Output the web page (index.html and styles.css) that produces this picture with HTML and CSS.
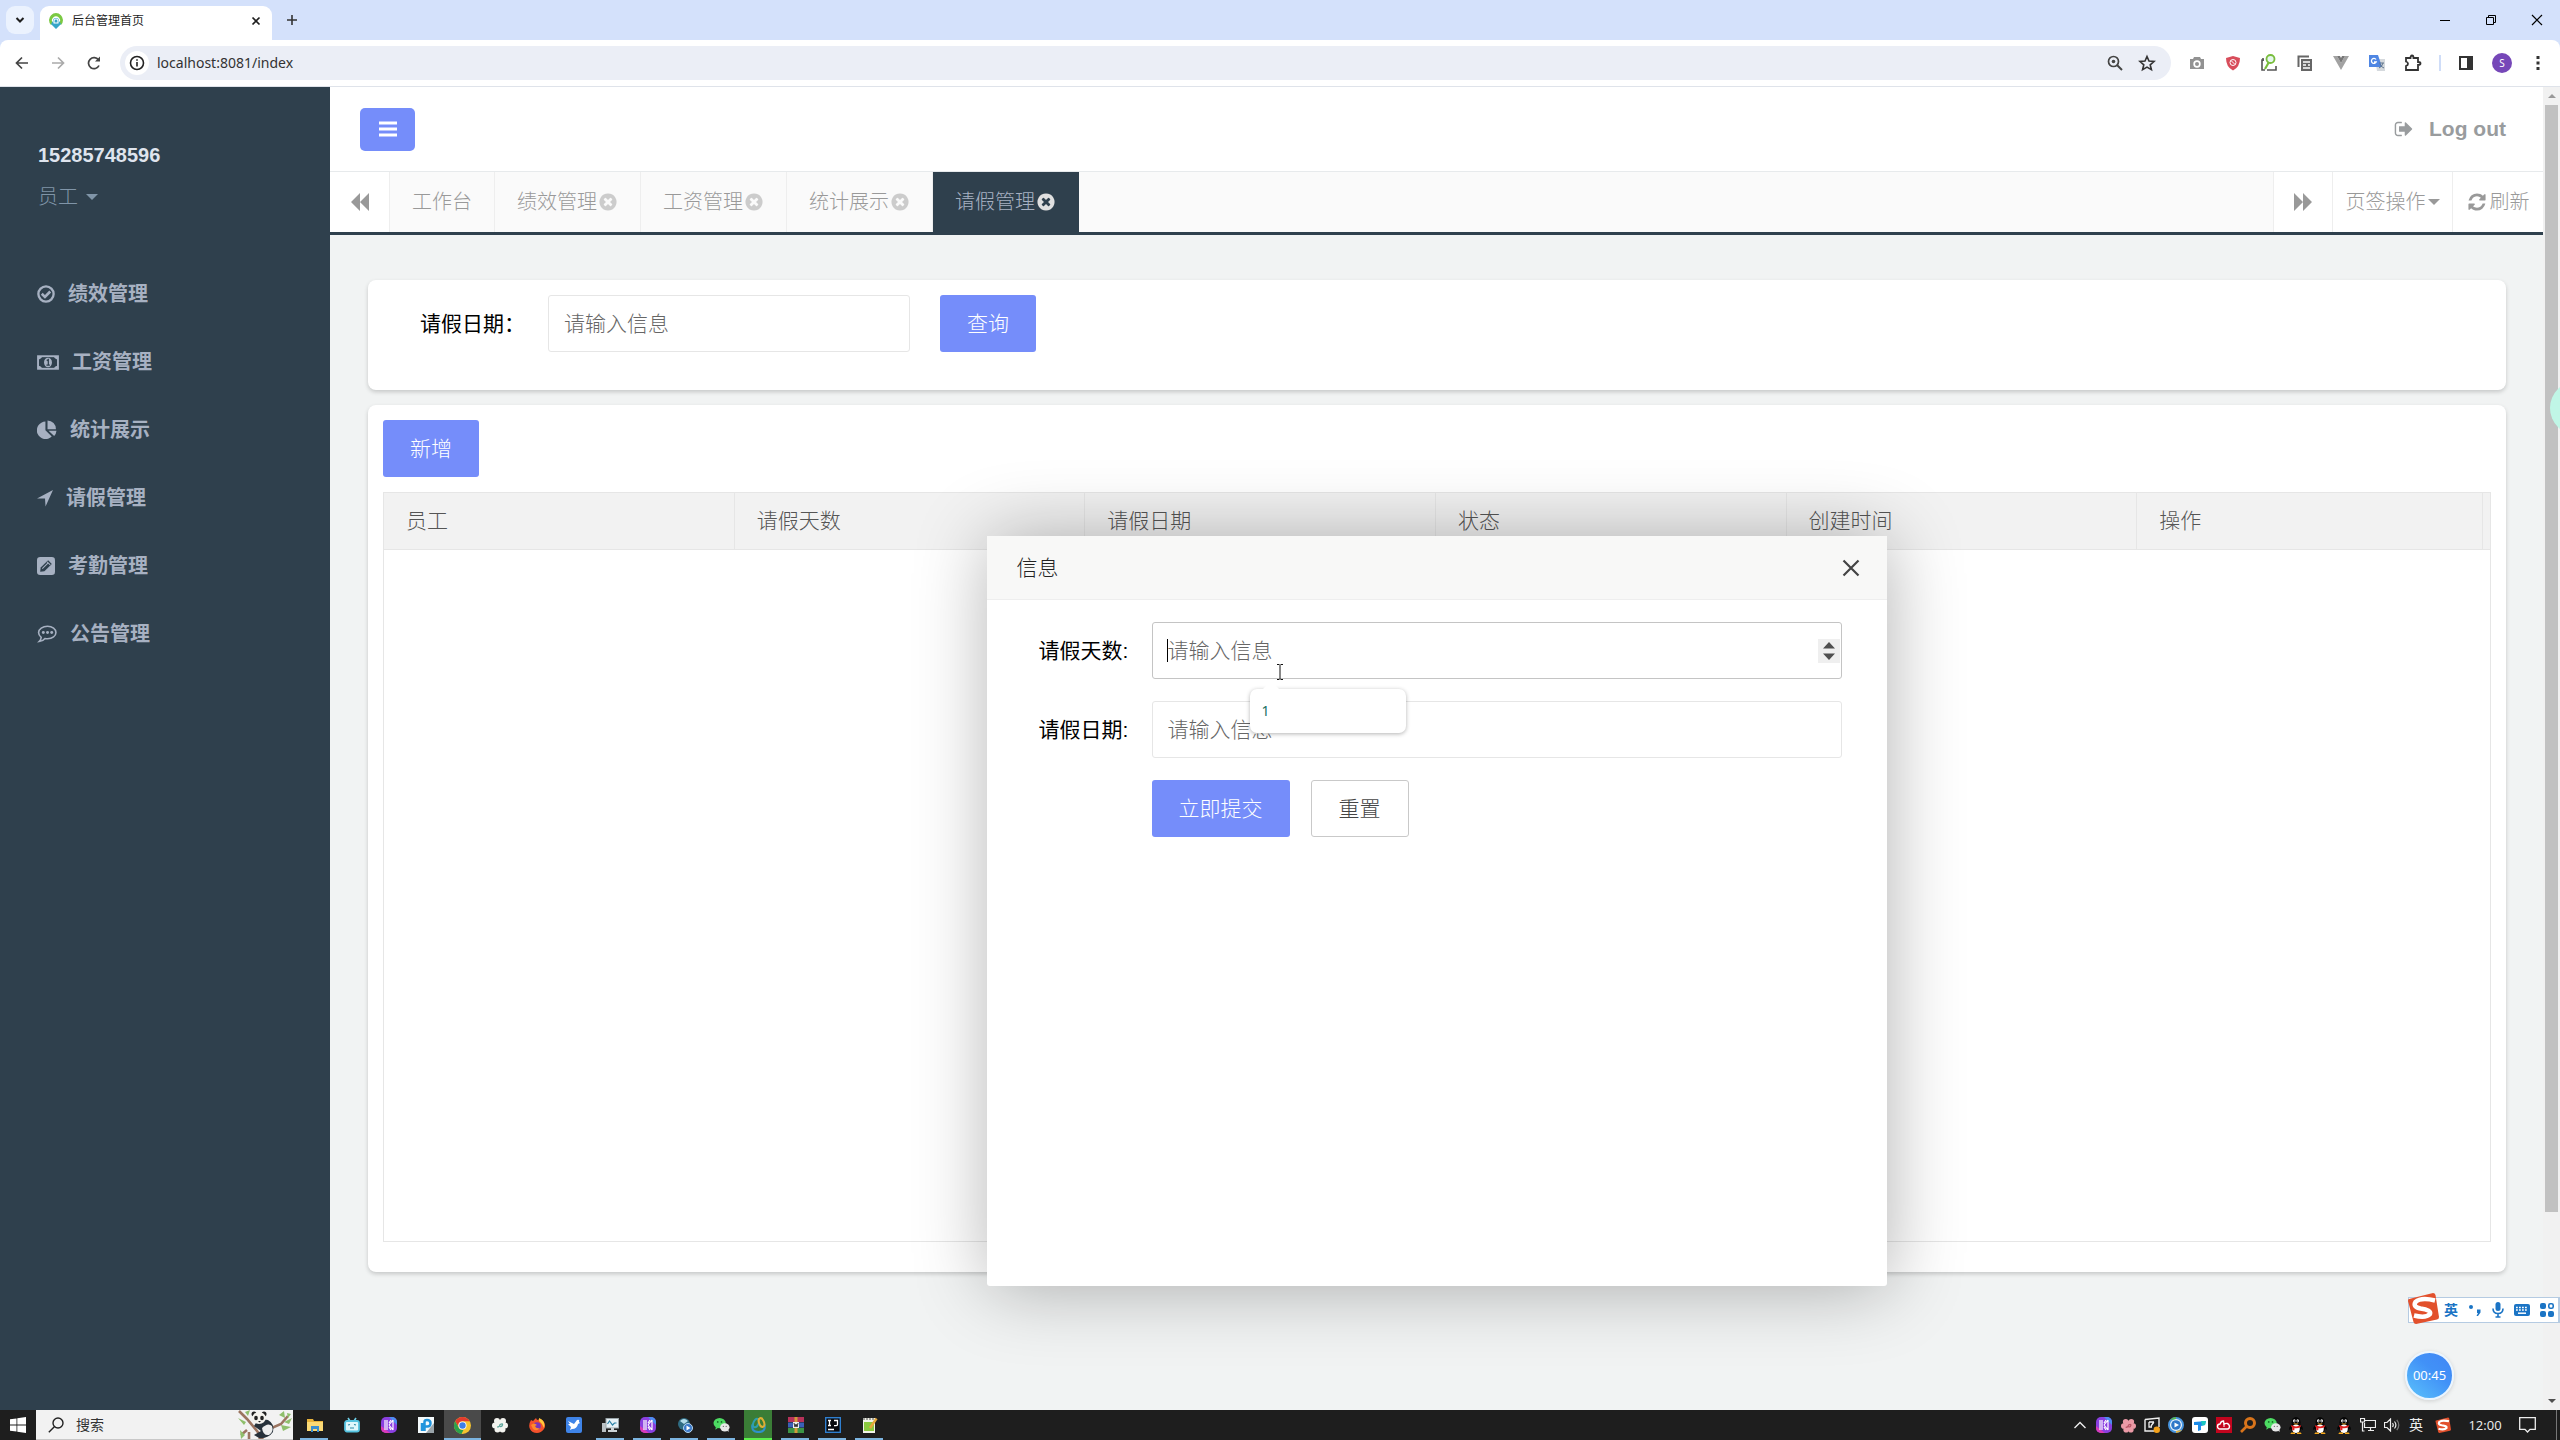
FILE: index.html
```html
<!DOCTYPE html>
<html lang="zh-CN">
<head>
<meta charset="utf-8">
<title>后台管理首页</title>
<link rel="stylesheet" href="styles.css">
</head>
<body>
<svg class="defs" aria-hidden="true">
  <symbol id="i-close-circle" viewBox="0 0 1792 1792"><path d="M1277 1122q0-26-19-45l-181-181 181-181q19-19 19-45 0-27-19-46l-90-90q-19-19-46-19-26 0-45 19l-181 181-181-181q-19-19-45-19-27 0-46 19l-90 90q-19 19-19 46 0 26 19 45l181 181-181 181q-19 19-19 45 0 27 19 46l90 90q19 19 46 19 26 0 45-19l181-181 181 181q19 19 45 19 27 0 46-19l90-90q19-19 19-46zm387-226q0 209-103 385.500t-279.500 279.500-385.500 103-385.500-103-279.500-279.500-103-385.500 103-385.500 279.500-279.500 385.500-103 385.500 103 279.500 279.500 103 385.500z"/></symbol>
  <symbol id="i-tile-k" viewBox="0 0 16 16"><rect width="16" height="16" rx="5" fill="#8a3fe0"/><path d="M8 0h3a5 5 0 0 1 5 5v3z" fill="#4c8df0"/><path d="M0 9v2a5 5 0 0 0 5 5h4z" fill="#d93bb8"/><path d="M4 3v10M6 3v10M8 8l4-5M8 8l4 5M10 3L8 6M10 13L8 10M12 3v10" stroke="#fff" stroke-width="1.200" fill="none"/></symbol>
  <symbol id="i-wechat" viewBox="0 0 18 16"><ellipse cx="7" cy="6" rx="6.500" ry="5.500" fill="#4ddb62"/><path d="M3 10l-.500 3 3-2z" fill="#4ddb62"/><ellipse cx="12.500" cy="10.500" rx="5" ry="4.300" fill="#e8e8e8"/><path d="M15 14l1.500 1.500V13z" fill="#e8e8e8"/><circle cx="5" cy="4.700" r=".9" fill="#176b28"/><circle cx="9" cy="4.700" r=".9" fill="#176b28"/><circle cx="11" cy="9.500" r=".7" fill="#777"/><circle cx="14" cy="9.500" r=".7" fill="#777"/></symbol>
  <symbol id="i-qq" viewBox="0 0 16 18"><path d="M3 9q-3 2-2 5l2-2zM13 9q3 2 2 5l-2-2z" fill="#050505"/><ellipse cx="8" cy="11" rx="5.500" ry="6" fill="#050505"/><ellipse cx="8" cy="5.500" rx="4.700" ry="5.500" fill="#050505"/><ellipse cx="8" cy="12.500" rx="4" ry="4.500" fill="#fff"/><path d="M3 8.500q5 3 10 0v2q-5 3-10 0zM4 11h2.300v3H4z" fill="#e02020"/><ellipse cx="6.200" cy="4" rx="1.300" ry="1.700" fill="#fff"/><ellipse cx="9.800" cy="4" rx="1.300" ry="1.700" fill="#fff"/><circle cx="6.500" cy="4.200" r=".6"/><circle cx="9.500" cy="4.200" r=".6"/><path d="M5 7h6q-3 2-6 0zM3 16.500h4v1.500H2zM9 16.500h4l1 1.500H9z" fill="#f7a91c"/></symbol>
  <symbol id="i-sogou" viewBox="0 0 32 32"><path d="M2 7L26 1q2 0 2.500 2L32 25q0 2-2 2.500L9 32q-2 0-2.500-2L1 9q0-2 1-2z" fill="#e2502c"/><path d="M28 8.500Q14 5 8.500 10q-3 5 5 6.500 11 1.500 9.500 5.500-4 4.500-16 1.500" fill="none" stroke="#fff" stroke-width="4.500"/></symbol>
</svg>

<header class="browser">
  <div class="tabstrip">
    <button class="tab-search" aria-label="搜索标签页"><svg width="10" height="10" viewBox="0 0 10 10"><path d="M1.500 3L5 6.500 8.500 3" fill="none" stroke="#1f1f1f" stroke-width="2"/></svg></button>
    <div class="browser-tab">
      <svg width="16" height="16" viewBox="0 0 16 16"><path d="M3 12A7 7 0 1 1 13 12l-2-2a4 4 0 1 0-6 0z" fill="#7ac943"/><path d="M8 5a3 3 0 0 1 3 3l2 3-5 5-5-5 2-3a3 3 0 0 1 3-3z" fill="#35a5c8"/><path d="M6 9.500V8a2 2 0 0 1 4 0v1.500M5.500 10h5" stroke="#fff" fill="none" stroke-width="1.200"/></svg>
      <span class="browser-tab-title">后台管理首页</span>
      <button class="icon-btn" aria-label="关闭标签页"><svg width="10" height="10" viewBox="0 0 10 10"><path d="M1.500 1.500l7 7M8.500 1.500l-7 7" stroke="#1f1f1f" stroke-width="1.700"/></svg></button>
    </div>
    <button class="icon-btn new-tab" aria-label="新标签页"><svg width="12" height="12" viewBox="0 0 12 12"><path d="M6 1v10M1 6h10" stroke="#333" stroke-width="1.600"/></svg></button>
    <div class="window-controls">
      <button class="icon-btn" aria-label="最小化"><svg width="12" height="12" viewBox="0 0 12 12"><path d="M1 6.500h10" stroke="#000"/></svg></button>
      <button class="icon-btn" aria-label="还原"><svg width="12" height="12" viewBox="0 0 12 12"><path d="M1.500 3.500h7v7h-7zM3.500 3V1.500h7v7H9" fill="none" stroke="#000"/></svg></button>
      <button class="icon-btn" aria-label="关闭"><svg width="12" height="12" viewBox="0 0 12 12"><path d="M1 1l10 10M11 1L1 11" stroke="#000" stroke-width="1.200"/></svg></button>
    </div>
  </div>
  <div class="toolbar">
    <div class="nav-buttons">
      <button class="icon-btn" aria-label="后退"><svg width="14" height="14" viewBox="0 0 14 14"><path d="M13 7H2M7 1.500L1.500 7 7 12.500" fill="none" stroke="#444" stroke-width="1.700"/></svg></button>
      <button class="icon-btn" aria-label="前进"><svg width="14" height="14" viewBox="0 0 14 14"><path d="M1 7h11M7 1.500L12.500 7 7 12.500" fill="none" stroke="#aaa" stroke-width="1.700"/></svg></button>
      <button class="icon-btn" aria-label="重新加载"><svg width="14" height="14" viewBox="0 0 14 14"><path d="M12 9.500A5.500 5.500 0 1 1 11.500 4" fill="none" stroke="#444" stroke-width="1.700"/><path d="M13 .5v5H8z" fill="#444"/></svg></button>
    </div>
    <div class="omnibox">
      <span class="site-info"><svg width="16" height="16" viewBox="0 0 16 16"><circle cx="8" cy="8" r="6.500" fill="none" stroke="#222" stroke-width="1.600"/><path d="M8 7v4.500M8 4.200v1.600" stroke="#222" stroke-width="1.600"/></svg></span>
      <input class="url" type="text" value="localhost:8081/index" aria-label="地址">
      <button class="icon-btn" aria-label="缩放"><svg width="16" height="16" viewBox="0 0 16 16"><circle cx="6.500" cy="6.500" r="5" fill="none" stroke="#444" stroke-width="1.700"/><circle cx="6.500" cy="6.500" r="1.800" fill="#444"/><path d="M10 10l5 5" stroke="#444" stroke-width="1.900"/></svg></button>
      <button class="icon-btn" aria-label="收藏"><svg width="18" height="18" viewBox="0 0 18 18"><path d="M9 2.500l2 4.600 5 .4-3.800 3.300 1.200 4.900L9 13.100l-4.400 2.600 1.200-4.900L2 7.500l5-.4z" fill="none" stroke="#333" stroke-width="1.600"/></svg></button>
    </div>
    <div class="extensions">
      <svg width="16" height="16" viewBox="0 0 16 16"><path d="M1 4h3l1-2h6l1 2h3v10H1z" fill="#929292"/><circle cx="8" cy="9" r="3.700" fill="#fff"/><circle cx="8" cy="9" r="2" fill="#929292"/></svg>
      <svg width="16" height="16" viewBox="0 0 16 16"><path d="M8 1l7 2q0 9-7 12.500Q1 12 1 3z" fill="#d84d5b"/><circle cx="8" cy="7.500" r="3" fill="none" stroke="#fff"/><path d="M6 5.500l4 4" stroke="#fff"/></svg>
      <svg width="16" height="18" viewBox="0 0 16 18"><path d="M3 6H1v10h3M6 16h9v-4M2 4v3" fill="none" stroke="#555" stroke-width="1.600"/><circle cx="9.500" cy="5" r="4" fill="#e5f6ee" stroke="#79bd3c" stroke-width="1.800"/><path d="M8 8l-4 7" stroke="#79bd3c" stroke-width="2.200"/></svg>
      <svg width="16" height="16" viewBox="0 0 16 16"><path d="M1.500 12V1.500H12" fill="none" stroke="#666" stroke-width="2"/><path d="M4 4h11v12H4z" fill="#666"/><path d="M6 7h7M6 10h3M6 13h7M11 10h2" stroke="#fff" stroke-width="1.300"/></svg>
      <svg width="16" height="16" viewBox="0 0 16 16"><path d="M0 1h4l4 7 4-7h4L8 15z" fill="#a2a2a2"/><path d="M4 1h3l1 2 1-2h3L8 8z" fill="#777"/></svg>
      <svg width="16" height="16" viewBox="0 0 16 16"><path d="M6 4h10v12H8z" fill="#d5d9dd"/><path d="M0 0h9l4 12H0z" fill="#4f86e3"/><path d="M7 4.500A2.500 2.500 0 1 0 7.200 7H5" fill="none" stroke="#fff" stroke-width="1.300"/><path d="M10 8h5M14 8q-1 4-4 5M11 9q1 3 4 4" fill="none" stroke="#60758c"/></svg>
      <svg width="18" height="18" viewBox="0 0 18 18"><path d="M2 4h4.500q0-2.500 1.500-2.500T9.500 4H14v4q2.500 0 2.500 1.500T14 11v5H2v-4q2-.5 2-2.200T2 7.500z" fill="none" stroke="#333" stroke-width="1.800"/></svg>
      <span class="ext-divider"></span>
      <svg width="16" height="16" viewBox="0 0 16 16"><rect x="2" y="2" width="12" height="12" fill="none" stroke="#333" stroke-width="2"/><path d="M9 2h5v12H9z" fill="#333"/></svg>
      <span class="avatar">S</span>
      <svg width="16" height="16" viewBox="0 0 16 16"><path d="M6.500 1h3v3h-3zM6.500 6.500h3v3h-3zM6.500 12h3v3h-3z" fill="#333"/></svg>
    </div>
  </div>
</header>

<div class="app">
  <aside class="sidebar">
    <div class="profile">
      <strong class="profile-name">15285748596</strong>
      <a class="profile-role" href="#">员工 <span class="caret"></span></a>
    </div>
    <nav class="menu">
      <a href="#"><svg width="18" height="18" viewBox="0 0 17 17"><circle cx="8.500" cy="8.500" r="7.200" fill="none" stroke="currentColor" stroke-width="2.200"/><path d="M4.500 8.300l3 3 5-5.200" fill="none" stroke="currentColor" stroke-width="2.500"/></svg>绩效管理</a>
      <a href="#"><svg width="22" height="15" viewBox="0 0 21 14"><rect x="1" y="1" width="19" height="12" fill="none" stroke="currentColor" stroke-width="1.800"/><path d="M1 1h4q-1 3-4 3zM20 1h-4q1 3 4 3zM1 13h4q-1-3-4-3zM20 13h-4q1-3 4-3z" fill="currentColor"/><ellipse cx="10.500" cy="7" rx="3.800" ry="4.600" fill="currentColor"/><path d="M9.300 5.200l1.500-1v5M9 9.500h3.300" fill="none" stroke="#2f404d" stroke-width="1.200"/></svg>工资管理</a>
      <a href="#"><svg width="20" height="20" viewBox="0 0 19 19"><path d="M8 1.500v8.300l6 5.900A8.300 8.300 0 1 1 8 1.500z" fill="currentColor"/><path d="M10 .5a8 8 0 0 1 8 8.200h-8zM11 10.200h7.500q-.2 2.800-2.200 5z" fill="currentColor"/></svg>统计展示</a>
      <a href="#"><svg width="16" height="17" viewBox="0 0 15 16"><path d="M15 0L8 15.500 7.500 8H0z" fill="currentColor"/></svg>请假管理</a>
      <a href="#"><svg width="18" height="18" viewBox="0 0 17 17"><rect width="17" height="17" rx="3" fill="currentColor"/><path d="M3 14l.5-4 7-7 3.500 3.500-7 7z" fill="#2f404d"/><path d="M5 11l5.500-5.500M9.500 4.500l3 3" stroke="currentColor" stroke-width="1"/></svg>考勤管理</a>
      <a href="#"><svg width="20" height="18" viewBox="0 0 19 17"><path d="M10 1.200c4.600 0 8 2.600 8 5.900S14.600 13 10 13q-1.400 0-2.400-.2Q5.500 15.500 2 15.700q2-1.800 2-4Q1.500 9.800 1.500 7.100C1.500 3.800 5.400 1.200 10 1.200z" fill="none" stroke="currentColor" stroke-width="1.500"/><circle cx="6" cy="7" r="1.400" fill="currentColor"/><circle cx="10" cy="7" r="1.400" fill="currentColor"/><circle cx="14" cy="7" r="1.400" fill="currentColor"/></svg>公告管理</a>
    </nav>
  </aside>

  <main class="main">
    <div class="topbar">
      <button class="btn menu-toggle" aria-label="折叠菜单"><svg width="18" height="16" viewBox="0 0 18 16"><path d="M0 2h18M0 8h18M0 14h18" stroke="#fff" stroke-width="3"/></svg></button>
      <a class="logout" href="#"><svg width="20" height="20" viewBox="0 0 1792 1792"><path fill="currentColor" d="M704 1440q0 4 1 20t.5 26.500-3 23.500-10 19.500-20.500 6.500h-320q-119 0-203.500-84.500t-84.500-203.500v-704q0-119 84.500-203.500t203.500-84.500h320q13 0 22.500 9.500t9.500 22.500q0 4 1 20t.5 26.500-3 23.500-10 19.500-20.500 6.500h-320q-66 0-113 47t-47 113v704q0 66 47 113t113 47h312l11.500 1 11.500 3 8 5.500 7 9 2 13.500zm928-544q0 26-19 45l-544 544q-19 19-45 19t-45-19-19-45v-288h-448q-26 0-45-19t-19-45v-384q0-26 19-45t45-19h448v-288q0-26 19-45t45-19 45 19l544 544q19 19 19 45z"/></svg>Log out</a>
    </div>
    <div class="page-tabs">
      <button class="tab-roll" aria-label="向左"><svg width="18" height="20" viewBox="0 0 18 20"><path d="M9 1v18L0 10zM18 1v18L9 10z" fill="currentColor"/></svg></button>
      <nav class="tab-list">
        <a href="#">工作台</a>
        <a href="#">绩效管理<svg class="tab-close" width="20" height="20"><use href="#i-close-circle"/></svg></a>
        <a href="#">工资管理<svg class="tab-close" width="20" height="20"><use href="#i-close-circle"/></svg></a>
        <a href="#">统计展示<svg class="tab-close" width="20" height="20"><use href="#i-close-circle"/></svg></a>
        <a href="#" class="active">请假管理<svg class="tab-close" width="20" height="20"><use href="#i-close-circle"/></svg></a>
      </nav>
      <button class="tab-roll tab-next" aria-label="向右"><svg width="18" height="20" viewBox="0 0 18 20"><path d="M0 1v18l9-9zM9 1v18l9-9z" fill="currentColor"/></svg></button>
      <button class="tab-ops">页签操作<span class="caret"></span></button>
      <button class="tab-refresh"><svg width="20" height="20" viewBox="0 0 1792 1792"><path fill="currentColor" d="M1639 1056q0 5-1 7-64 268-268 434.500t-478 166.500q-146 0-282.500-55t-243.500-157l-129 129q-19 19-45 19t-45-19-19-45v-448q0-26 19-45t45-19h448q26 0 45 19t19 45-19 45l-137 137q71 66 161 102t187 36q134 0 250-65t186-179q11-17 53-117 8-23 30-23h192q13 0 22.500 9.500t9.500 22.500zm25-800v448q0 26-19 45t-45 19h-448q-26 0-45-19t-19-45 19-45l138-138q-148-137-349-137-134 0-250 65t-186 179q-11 17-53 117-8 23-30 23h-199q-13 0-22.500-9.500t-9.500-22.500v-7q65-268 270-434.500t480-166.500q146 0 284 55.500t245 156.500l130-129q19-19 45-19t45 19 19 45z"/></svg>刷新</button>
    </div>

    <div class="content">
      <form class="card search-card">
        <label for="q-date">请假日期：</label>
        <input class="field" id="q-date" type="text" placeholder="请输入信息">
        <button class="btn" type="button">查询</button>
      </form>
      <section class="card table-card">
        <button class="btn" type="button">新增</button>
        <div class="table-box">
          <table>
            <thead><tr><th>员工</th><th>请假天数</th><th>请假日期</th><th>状态</th><th>创建时间</th><th class="th-last">操作</th><th class="th-patch"></th></tr></thead>
            <tbody></tbody>
          </table>
        </div>
      </section>

      <div class="modal" role="dialog" aria-labelledby="modal-title">
        <div class="modal-head">
          <span id="modal-title">信息</span>
          <button class="icon-btn" aria-label="关闭"><svg width="18" height="18" viewBox="0 0 18 18"><path d="M1.500 1.500l15 15M16.500 1.500l-15 15" stroke="#444" stroke-width="2.200"/></svg></button>
        </div>
        <form class="modal-form">
          <label for="m-days">请假天数:</label>
          <div class="number-field">
            <input class="field focused" id="m-days" type="number" placeholder="请输入信息">
            <span class="text-caret"></span>
            <span class="stepper"><svg width="12" height="20" viewBox="0 0 12 20"><path d="M0 7.500L6 1l6 6.500zM0 12.500L6 19l6-6.500z" fill="#4f4f4f"/></svg></span>
            <svg class="pointer" width="8" height="16" viewBox="0 0 8 16"><path d="M1 .5h2.500M4.500 .5H7M1 15.500h2.500M4.500 15.500H7M4 1v14" stroke="#111" fill="none"/></svg>
            <div class="suggest">1</div>
          </div>
          <label for="m-date">请假日期:</label>
          <input class="field" id="m-date" type="text" placeholder="请输入信息">
          <div class="modal-actions">
            <button class="btn" type="button">立即提交</button>
            <button class="btn btn-plain" type="reset">重置</button>
          </div>
        </form>
      </div>
    </div>
  </main>

  <div class="scrollbar">
    <svg width="8" height="6" viewBox="0 0 8 6"><path d="M0 5l4-4 4 4z" fill="#999"/></svg>
    <div class="scroll-track"><div class="scroll-thumb"></div></div>
    <svg width="8" height="6" viewBox="0 0 8 6"><path d="M0 1l4 4 4-4z" fill="#505050"/></svg>
  </div>

  <div class="edge-ball"></div>
  <div class="ime-bar">
    <svg class="ime-logo" width="32" height="32"><use href="#i-sogou"/></svg>
    <b>英</b>
    <svg width="14" height="14" viewBox="0 0 14 14"><circle cx="3" cy="4" r="2" fill="#1b74c5"/><path d="M9 6.500h3.500v3L10 13H8.500l1.500-3H9z" fill="#1b74c5"/></svg>
    <svg width="12" height="16" viewBox="0 0 12 16"><rect x="3.500" y="0" width="5" height="9" rx="2.500" fill="#1b74c5"/><path d="M1 6.500q0 5 5 5t5-5M6 11.500V15M3.500 15h5" fill="none" stroke="#1b74c5" stroke-width="1.600"/></svg>
    <svg width="16" height="12" viewBox="0 0 16 12"><rect width="16" height="12" rx="2" fill="#1b74c5"/><path d="M2 3.500h12M2 6h12" stroke="#fff" stroke-width="1.500" stroke-dasharray="1.800 1.200"/><path d="M4 9.200h8" stroke="#fff" stroke-width="1.500"/></svg>
    <svg width="14" height="14" viewBox="0 0 14 14"><rect width="6" height="6" rx="2" fill="#1b74c5"/><rect y="8" width="6" height="6" rx="2" fill="#1b74c5"/><rect x="8" y="8" width="6" height="6" rx="2" fill="#1b74c5"/><rect x="8.800" y=".8" width="4.400" height="4.400" rx="1.500" fill="none" stroke="#1b74c5" stroke-width="1.600"/></svg>
  </div>
  <div class="timer">00:45</div>
</div>

<footer class="taskbar">
  <button class="start" aria-label="开始"><svg width="16" height="16" viewBox="0 0 16 16"><path d="M0 2.300L6.500 1.400v6.200H0zM7.300 1.300L16 0v7.600H7.300zM0 8.400h6.500v6.200L0 13.700zM7.300 8.400H16V16l-8.700-1.300z" fill="#fff"/></svg></button>
  <label class="task-search">
    <svg width="16" height="16" viewBox="0 0 16 16"><circle cx="10" cy="6" r="5" fill="none" stroke="#222" stroke-width="1.400"/><path d="M6.300 9.700L.8 15.200" stroke="#222" stroke-width="1.400"/></svg>
    <input type="search" placeholder="搜索" aria-label="搜索">
    <svg width="56" height="29" viewBox="0 0 56 29"><path d="M2 1l8 8 10 12 6 8M22 29l8-9 14-6 7-8M10 20l-6 5M12 22v7" fill="none" stroke="#9b7460" stroke-width="2.600"/><path d="M1 8l8 4-2 3zM3 20l5 5-4 4zM44 15l10 2-8 4zM42 5l5-4 1 7zM50 3l4 1-3 4zM8 2l5-2-2 6zM47 12l8-4-3 6z" fill="#8fbf6b"/><path d="M17 16q4-8 14-6 7 4 5 12-5 7-14 6l-5-3 7-4z" fill="#27313a"/><path d="M25 18q6-6 10-2 2 6-3 9-6 1-7-7z" fill="#eee"/><circle cx="17" cy="4" r="2.500" fill="#222"/><circle cx="27" cy="4" r="2.500" fill="#222"/><ellipse cx="22" cy="8" rx="6.800" ry="6" fill="#f5f3ee"/><ellipse cx="19" cy="8" rx="1.800" ry="2.200" fill="#222"/><ellipse cx="25" cy="8" rx="1.800" ry="2.200" fill="#222"/><path d="M21 11h3l-1.500 1.500z" fill="#222"/></svg>
  </label>
  <div class="task-apps">
    <button class="open" aria-label="文件资源管理器"><svg width="16" height="16" viewBox="0 0 16 16"><path d="M0 2h6l1 2h9v10H0z" fill="#e8b33c"/><path d="M0 5h16v9H0z" fill="#fbd975"/><path d="M4 15V9h8v6h-2v-3H6v3z" fill="#3b8ed0"/></svg></button>
    <button aria-label="哔哩哔哩"><svg width="16" height="16" viewBox="0 0 16 16"><path d="M4 1l2 3M12 1l-2 3" stroke="#6dcfe8" stroke-width="1.600"/><rect x="1" y="4" width="14" height="10.500" rx="2" fill="#dff7fc" stroke="#55c3e0" stroke-width="1.800"/><path d="M4 8l2-.5M10 7.500l2 .5M6 11h4" stroke="#2c8aa5" stroke-width="1.200"/></svg></button>
    <button aria-label="应用"><svg width="16" height="16"><use href="#i-tile-k"/></svg></button>
    <button aria-label="应用"><svg width="16" height="16" viewBox="0 0 16 16"><rect width="16" height="16" fill="#f4fafc"/><path d="M16 6v10H8z" fill="#9aa4aa"/><path d="M6.500 14V5q0-2 2.500-2 3.500 0 3.500 3.300T9 9.500H7M4 14V6" fill="none" stroke="#2295dd" stroke-width="2.500"/></svg></button>
    <button class="open current" aria-label="Chrome"><svg width="17" height="17" viewBox="0 0 16 16"><circle cx="8" cy="8" r="8" fill="#f5c32f"/><path d="M1.100 4A8 8 0 0 1 14.900 4H8a4 4 0 0 0-3.500 6z" fill="#e33b2e"/><path d="M1.100 4l3.400 6A4 4 0 0 0 9 12l-2 4A8 8 0 0 1 1.100 4z" fill="#2ba24c"/><circle cx="8" cy="8" r="3.800" fill="#fff"/><circle cx="8" cy="8" r="3" fill="#3d7ee8"/></svg></button>
    <button aria-label="应用"><svg width="16" height="16" viewBox="0 0 16 16"><g fill="#f3f3ef"><circle cx="5" cy="4" r="3"/><circle cx="11" cy="4" r="3"/><circle cx="3" cy="8.500" r="3"/><circle cx="13" cy="8.500" r="3"/><circle cx="5.500" cy="12.500" r="3"/><circle cx="10.500" cy="12.500" r="3"/><circle cx="8" cy="8" r="5"/></g><path d="M5 10q3 0 3-2.500Q11 6 10.500 8T8 9.500" fill="none" stroke="#5aa39a" stroke-width="1.200"/></svg></button>
    <button aria-label="Firefox"><svg width="16" height="16" viewBox="0 0 16 16"><path d="M2 3l2 1 3-3 1 2q5-2 7 2 2 4 0 7-3 4-7 4-5 0-7-4-2-4 1-9z" fill="#f4512c"/><path d="M10 1q7 3 5 10-2-5-5-7z" fill="#ffca3a"/><circle cx="8" cy="9" r="3.800" fill="#7a36b8"/><path d="M2 8q3-3 6 0l-2 1q1 3 5 2-3 4-7 1z" fill="#ff8a2b"/></svg></button>
    <button aria-label="应用"><svg width="16" height="16" viewBox="0 0 16 16"><rect width="16" height="16" rx="2" fill="#3f84e8"/><path d="M2 4l6 3 3-4q3-1 2 2l1 1-2 1q-1 5-6 5l-2 1 1-3-3-3h2z" fill="#fff"/></svg></button>
    <button class="open" aria-label="监视器"><svg width="17" height="16" viewBox="0 0 17 16"><path d="M0 6h4v9H0z" fill="#b9c0c4"/><rect x="4" y="1.500" width="12.500" height="9.500" fill="#e7f1f6" stroke="#9aa5aa"/><path d="M5.500 7l2-3 3 4 2-2h2" fill="none" stroke="#2a81a6" stroke-width="1.200"/><path d="M9 11h3v2h3v2H6v-2h3z" fill="#cdd3d6"/></svg></button>
    <button class="open" aria-label="应用"><svg width="16" height="16"><use href="#i-tile-k"/></svg></button>
    <button class="open" aria-label="应用"><svg width="16" height="16" viewBox="0 0 16 16"><circle cx="7" cy="7" r="6" fill="#2f6c83"/><path d="M3 4q4-4 8 0L7 7z" fill="#b5dcea"/><circle cx="11" cy="11" r="4.500" fill="#3a79c9" stroke="#b7d6ef"/><path d="M9.500 8.500l4 2.500-4 2.500z" fill="#fff"/></svg></button>
    <button class="open" aria-label="微信"><svg width="17" height="16"><use href="#i-wechat"/></svg></button>
    <button class="open busy" aria-label="应用"><svg width="17" height="16" viewBox="0 0 17 16"><path d="M2.500 7.500Q1 15 8.500 15T14.500 7.500" fill="none" stroke="#2f91c9" stroke-width="2.200"/><ellipse cx="6" cy="6" rx="2.500" ry="4.500" transform="rotate(25 6 6)" fill="none" stroke="#2f9fae" stroke-width="2"/><ellipse cx="11.500" cy="5.500" rx="2.500" ry="4.500" transform="rotate(-20 11.500 5.500)" fill="none" stroke="#dfae34" stroke-width="2"/></svg></button>
    <button class="open" aria-label="WinRAR"><svg width="16" height="16" viewBox="0 0 16 16"><path d="M0 0h16v5H0z" fill="#b8325a"/><path d="M0 5.500h16v5H0z" fill="#3a60b8"/><path d="M0 11h16v5H0z" fill="#3c9445"/><path d="M6.500 0h3v16h-3z" fill="#d49a3a"/><path d="M5 5h6v6H5z" fill="#eee"/><path d="M6 6l1 4 1-3 1 3 1-4" fill="none" stroke="#333"/></svg></button>
    <button class="open" aria-label="IntelliJ IDEA"><svg width="16" height="16" viewBox="0 0 16 16"><rect x=".7" y=".7" width="14.600" height="14.600" fill="#07090e" stroke="#2f7fd0" stroke-width="1.400"/><path d="M3 3.500h3M4.500 3.500v5M3 8.500h3M9 3.500h3.500v4q0 1.200-2 1.200H9M3 12.500h6" fill="none" stroke="#fff" stroke-width="1.300"/></svg></button>
    <button class="open" aria-label="记事本"><svg width="16" height="16" viewBox="0 0 16 16"><path d="M1 1h12v15H1z" fill="#f2f4ea"/><path d="M2 5h10v9H2z" fill="#8ac93e"/><path d="M2 1v2M5 1v2M8 1v2M11 1v2" stroke="#555"/><path d="M14.500 1.500L8 11" stroke="#e7a83a" stroke-width="2.500"/></svg></button>
  </div>
  <div class="tray">
    <span><svg width="12" height="8" viewBox="0 0 12 8"><path d="M.5 7L6 1.500 11.500 7" fill="none" stroke="#eee" stroke-width="1.400"/></svg></span>
    <span><svg width="16" height="16"><use href="#i-tile-k"/></svg></span>
    <span><svg width="15" height="15" viewBox="0 0 16 16"><g fill="#eb9aa6"><circle cx="5" cy="4" r="3"/><circle cx="11" cy="4" r="3"/><circle cx="3" cy="8.500" r="3"/><circle cx="13" cy="8.500" r="3"/><circle cx="5.500" cy="12.500" r="3"/><circle cx="10.500" cy="12.500" r="3"/><circle cx="8" cy="8" r="5"/></g><path d="M5 10q3 0 3-2.500Q11 6 10.500 8T8 9.500" fill="none" stroke="#b75364" stroke-width="1.200"/></svg></span>
    <span><svg width="16" height="16" viewBox="0 0 16 16"><path d="M1 2.500L15 1v9M1 2.500V14h9" fill="none" stroke="#eee" stroke-width="1.400"/><path d="M5 5h5M5 5v5h3M10 5l-3 4" fill="none" stroke="#eee" stroke-width="1.300"/><circle cx="12.800" cy="12.800" r="3.200" fill="#f5a21b"/></svg></span>
    <span><svg width="16" height="16" viewBox="0 0 16 16"><circle cx="8" cy="8" r="7" fill="#eef5fb" stroke="#4795df" stroke-width="2"/><path d="M2 3a8 8 0 0 1 6-3v2z" fill="#59b84e"/><path d="M14 13a8 8 0 0 1-6 3v-2z" fill="#e3b33e"/><circle cx="8" cy="8" r="4.800" fill="#2d76c9"/><path d="M6.500 5.500L11 8l-4.500 2.500z" fill="#fff"/></svg></span>
    <span><svg width="16" height="16" viewBox="0 0 16 16"><rect width="16" height="16" rx="3" fill="#fff"/><path d="M2 5l12-1-1 4-4 1v4l-3 1V8L2 8z" fill="#1b8be8"/><path d="M9 4h5l-1 4-3 .5z" fill="#19c6c0"/></svg></span>
    <span><svg width="16" height="16" viewBox="0 0 16 16"><rect width="16" height="16" fill="#c3051e"/><path d="M4 12a2.500 2.500 0 0 1 0-5q1-3 3.500-3L8 7q4-2 5.500 2 0 3-2 3z" fill="none" stroke="#fff" stroke-width="1.400"/><path d="M8 7v3" stroke="#fff"/></svg></span>
    <span><svg width="16" height="16" viewBox="0 0 16 16"><circle cx="10" cy="6" r="4.500" fill="none" stroke="#d9741b" stroke-width="3"/><path d="M6.500 9.500L1 15" stroke="#d9741b" stroke-width="2.600"/></svg></span>
    <span><svg width="17" height="16"><use href="#i-wechat"/></svg></span>
    <span><svg width="16" height="17"><use href="#i-qq"/></svg></span>
    <span><svg width="16" height="17"><use href="#i-qq"/></svg></span>
    <span><svg width="16" height="17"><use href="#i-qq"/></svg></span>
    <span><svg width="16" height="14" viewBox="0 0 16 14"><path d="M5 2.500h10.500v7H4.500V5M8 12.500h6M10.500 9.500v3M.5.500h4V4h-4zM2.500 4v9h2" fill="none" stroke="#eee" stroke-width="1.200"/></svg></span>
    <span><svg width="16" height="14" viewBox="0 0 16 14"><path d="M.5 4.500H3l3.500-3.500v12L3 9.500H.5zM8.500 5q1.500 2 0 4M10.500 3.500q2.800 3.500 0 7" fill="none" stroke="#eee" stroke-width="1.200"/><path d="M12.800 1.800q4 5.200 0 10.400" fill="none" stroke="#777" stroke-width="1.200"/></svg></span>
    <span>英</span>
    <span class="tray-ime"><svg width="16" height="16"><use href="#i-sogou"/></svg></span>
    <time class="clock">12:00</time>
    <button class="notify" aria-label="通知"><svg width="17" height="16" viewBox="0 0 17 16"><path d="M.7.7h15.600v11.600H11L8.500 15 6 12.300H.7z" fill="none" stroke="#eee" stroke-width="1.300"/></svg></button>
    <span class="show-desktop"></span>
  </div>
</footer>
</body>
</html>
```

FILE: styles.css
```css
* { box-sizing: border-box; }

body {
  margin: 0;
  height: 100vh;
  display: flex;
  flex-direction: column;
  overflow: hidden;
  font-family: "Liberation Sans", "Noto Sans CJK SC", sans-serif;
  font-size: 21px;
  line-height: 28px;
  color: #000;
}

a { color: inherit; text-decoration: none; }
button, input { font: inherit; color: inherit; }
button { border: 0; padding: 0; background: none; }
input { outline: 0; min-width: 0; }
svg { display: block; flex: none; }
.defs { position: absolute; width: 0; height: 0; }
.icon-btn { width: 20px; height: 20px; display: grid; place-items: center; flex: none; }

/* Browser chrome */
.browser { flex: none; font-family: "Noto Sans", "Noto Sans CJK SC", sans-serif; background: #d4e1fb; }
.tabstrip { height: 40px; display: flex; align-items: flex-end; padding-left: 6px; }
.tab-search { width: 28px; height: 28px; margin: 0 6px 6px 0; border-radius: 9px; background: #ebf2fe; display: grid; place-items: center; }
.browser-tab {
  width: 232px; height: 34px; padding: 0 6px 4px 8px;
  display: flex; align-items: center; gap: 8px;
  background: #fff; border-radius: 9px 9px 0 0;
}
.browser-tab-title { flex: 1; font-size: 12px; line-height: 16px; color: #1f1f1f; }
.new-tab { margin: 0 0 10px 10px; }
.window-controls { margin-left: auto; display: flex; gap: 26px; padding: 0 13px 10px 0; }
.toolbar { height: 47px; display: flex; align-items: center; background: #fff; border-bottom: 1px solid #dfe3ea; border-radius: 8px 8px 0 0; padding: 6px 4px 7px 12px; }
.nav-buttons { display: flex; gap: 16px; margin-right: 16px; }
.omnibox { flex: 1; height: 34px; display: flex; align-items: center; gap: 12px; padding: 0 14px 0 5px; border-radius: 17px; background: #ebeef6; }
.site-info { width: 24px; height: 24px; border-radius: 50%; background: #fff; display: grid; place-items: center; }
.url { flex: 1; border: 0; padding: 0; margin-left: -4px; background: none; font-size: 14px; line-height: 20px; color: #333; }
.extensions { display: grid; grid-template-columns: repeat(7, 36px) 17px repeat(3, 36px); place-items: center; padding-left: 8px; }
.ext-divider { width: 2px; height: 16px; background: #cfddf8; }
.avatar { width: 20px; height: 20px; border-radius: 50%; background: #7647b8; color: #fff; font-size: 10px; line-height: 20px; text-align: center; }

/* Application shell */
.app { flex: 1; min-height: 0; display: flex; position: relative; overflow: hidden; }
.sidebar { width: 330px; flex: none; background: #2f404d; color: #a7b1c2; }
.profile { padding: 54px 38px 0; height: 173px; display: flex; flex-direction: column; gap: 14px; }
.profile-name { font-size: 20px; color: #dfe4ed; }
.profile-role { font-size: 20px; font-weight: 300; color: #8095a8; display: flex; align-items: center; gap: 8px; }
.caret { width: 0; height: 0; border: 6px solid transparent; border-top-color: currentColor; border-bottom: 0; }
.menu a { height: 68px; padding-left: 37px; display: flex; align-items: center; gap: 13px; font-size: 20px; font-weight: 700; }

.main { flex: 1; min-width: 0; display: flex; flex-direction: column; }
.topbar { height: 85px; flex: none; display: flex; align-items: center; justify-content: space-between; padding: 0 37px 0 30px; background: #fff; border-bottom: 1px solid #e7eaec; }
.btn { height: 57px; padding: 0 27px; border-radius: 3px; background: #758dfa; color: #fff; font-weight: 300; }
.menu-toggle { height: 43px; padding: 0 18px 0 19px; border-radius: 5px; }
.logout { display: flex; align-items: center; gap: 15px; font-weight: 700; color: #999c9e; }

.page-tabs { height: 63px; flex: none; display: flex; background: #fafafa; border-bottom: 3px solid #2f404d; color: #999; font-size: 20px; font-weight: 300; }
.page-tabs button { background: #fff; display: flex; align-items: center; justify-content: center; }
.tab-roll { width: 60px; border-right: 1px solid #eee; }
.tab-roll.tab-next { border-left: 1px solid #eee; }
.tab-list { flex: 1; display: flex; }
.tab-list a { display: flex; align-items: center; gap: 1px; padding: 0 22px; border-right: 1px solid #eee; }
.tab-close { fill: #ccc; }
.tab-list .active { background: #2f404d; color: #a7b1c2; border-color: #2f404d; }
.active .tab-close { fill: #e0e0e0; }
.tab-ops { width: 120px; gap: 2px; border-right: 1px solid #eee; }
.tab-refresh { width: 90px; gap: 3px; }

.content { flex: 1; min-height: 0; position: relative; padding: 45px 37px 0 38px; background: #f1f3f3; display: flex; flex-direction: column; gap: 15px; }
.card { background: #fff; border-radius: 8px; box-shadow: 0 2px 4px rgba(0, 0, 0, .18); }
.search-card { height: 110px; padding: 15px 52px; display: flex; align-items: flex-start; }
.search-card label { width: 128px; line-height: 57px; }
.field { width: 362px; height: 57px; padding: 0 15px; border: 1px solid #e6e6e6; border-radius: 3px; background: #fff; }
.field::placeholder { color: #666; font-weight: 300; opacity: 1; }
.search-card .btn { margin-left: 30px; }

.table-card { height: 867px; padding: 15px 15px 30px; display: flex; flex-direction: column; align-items: flex-start; gap: 15px; }
.table-box { flex: 1; align-self: stretch; border: 1px solid #e6e6e6; }
table { width: 100%; table-layout: fixed; border-collapse: separate; border-spacing: 0; background: #f2f2f2; }
th { width: 16.65%; height: 57px; padding: 0 0 0 22px; text-align: left; font-weight: 300; color: #555; border-right: 1px solid #e6e6e6; border-bottom: 1px solid #e6e6e6; }
.th-last { width: auto; }
.th-patch { width: 7px; padding: 0; border-right: 0; }

/* Dialog */
.modal { position: absolute; top: 301px; left: 50%; transform: translateX(-50%); width: 900px; height: 750px; background: #fff; border-radius: 3px; box-shadow: 2px 2px 75px rgba(0, 0, 0, .3); }
.modal-head { height: 64px; padding: 0 26px 0 30px; display: flex; align-items: center; justify-content: space-between; background: #f8f8f7; border-bottom: 1px solid #eee; color: #222; font-weight: 300; }
.modal-form { padding: 22px 45px 0 52px; display: grid; grid-template-columns: 90px 1fr; gap: 22px 23px; align-items: center; }
.modal-form .field { width: 100%; display: block; }
.number-field { position: relative; }
.number-field .field { border-color: #c4c4c4; appearance: textfield; }
.number-field .field::-webkit-inner-spin-button { appearance: none; }
.text-caret { position: absolute; left: 15px; top: 17px; width: 1px; height: 23px; background: #000; }
.stepper { position: absolute; right: 2px; top: 17px; width: 22px; height: 24px; background: #efefef; display: grid; place-items: center; }
.pointer { position: absolute; left: 124px; top: 42px; }
.suggest { position: absolute; left: 98px; top: 67px; width: 156px; height: 44px; padding: 8px 12px; border-radius: 7px; background: #fff; box-shadow: 0 1px 4px rgba(0, 0, 0, .3); font: 14px/28px "Noto Sans", sans-serif; color: #17705f; }
.suggest::before { content: ""; position: absolute; left: 13px; top: -8px; border: 8px solid transparent; border-top: 0; border-bottom-color: #fff; }
.modal-actions { grid-column: 2; display: flex; gap: 21px; }
.btn-plain { background: #fff; border: 1px solid #c9c9c9; color: #444; }

/* Page scroll bar */
.scrollbar { width: 17px; flex: none; display: flex; flex-direction: column; align-items: center; padding: 6px 0; gap: 6px; background: #f1f1f1; }
.scroll-track { flex: 1; align-self: stretch; padding: 0 2px; }
.scroll-thumb { height: 86%; background: #c1c1c1; }

/* Floating desktop tools */
.edge-ball { position: absolute; right: -44px; top: 294px; width: 54px; height: 54px; border-radius: 50%; background: #c0f6e6; }
.ime-bar { position: absolute; right: 0; bottom: 87px; height: 26px; padding-right: 4px; display: flex; align-items: center; gap: 10px; background: #fff; border: 1px solid #b5cbe2; border-right-width: 2px; font-size: 14px; color: #1b74c5; }
.ime-logo { margin: 0 -5px 4px -2px; }
.timer { position: absolute; right: 106px; bottom: 10px; width: 49px; height: 49px; border: 2px solid #eaf5ff; border-radius: 50%; background: linear-gradient(40deg, #5bc2fb, #4191f7 60%, #4186f5); box-shadow: 0 1px 4px rgba(0, 0, 0, .15); color: #fff; font: 13px/45px "Noto Sans", sans-serif; text-align: center; }

/* Desktop task bar */
.taskbar { height: 30px; flex: none; display: flex; background: #1e1e1e; color: #eee; font: 14px/30px "Open Sans", "Noto Sans CJK SC", sans-serif; }
.start { width: 36px; display: grid; place-items: center; }
.task-search { width: 257px; margin-right: 3px; padding-left: 12px; display: flex; align-items: center; gap: 12px; background: #f2f2f2; border: 1px solid #c8c8c8; border-width: 0 0 1px; }
.task-search input { flex: 1; border: 0; padding: 0; background: none; }
.task-search input::placeholder { color: #333; opacity: 1; }
.task-apps { display: flex; }
.task-apps button { width: 37px; height: 30px; display: grid; place-items: center; position: relative; }
.task-apps .open::after { content: ""; position: absolute; left: 4px; right: 5px; bottom: 0; height: 2px; background: #7cb4e0; }
.task-apps .current { background: #4a4a4a; }
.task-apps .current::after { left: 0; right: 0; }
.task-apps .busy { background: linear-gradient(#3a7d36, #3a7d36) 4px 0 / 28px 30px no-repeat; }
.task-apps .busy::after { background: #5cf04c; }
.tray { margin-left: auto; display: flex; }
.tray span { width: 24px; display: grid; place-items: center; }
.tray .tray-ime { width: 30px; }
.clock { width: 54px; text-align: center; font-size: 13px; }
.notify { width: 30px; display: grid; place-items: center; }
.tray .show-desktop { width: 15px; margin-right: 3px; border-right: 1px solid #777; }
```
